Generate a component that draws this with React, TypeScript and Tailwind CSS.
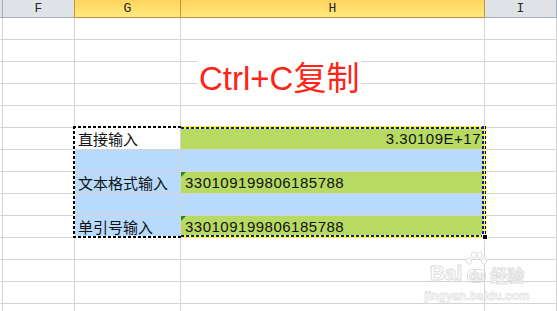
import type { ReactNode } from "react";

const cols = "grid grid-cols-[3px_72px_106px_304px_1fr]";
const line = "border-r border-b border-[#d4d4d4]";
const num = "font-['Liberation_Sans',sans-serif] text-[15px] tracking-[0.5px] text-[#111]";
const cjk = "font-['Noto_Sans_CJK_SC',sans-serif] text-[15px] text-[#111]";

type Row = {
  label?: string;
  labelBg?: string;
  value?: string;
  valueBg?: string;
  right?: boolean;
};

const tableRows: Record<number, Row> = {
  6: { label: "直接输入", labelBg: "bg-white", value: "3.30109E+17", valueBg: "bg-[#b7da62]", right: true },
  7: { labelBg: "bg-[#b8dbfd]", valueBg: "bg-[#b8dbfd]" },
  8: { label: "文本格式输入", labelBg: "bg-[#b8dbfd]", value: "330109199806185788", valueBg: "bg-[#b7da62]" },
  9: { labelBg: "bg-[#b8dbfd]", valueBg: "bg-[#b8dbfd]" },
  10: { label: "单引号输入", labelBg: "bg-[#b8dbfd]", value: "330109199806185788", valueBg: "bg-[#b7da62]" },
};

function HeaderCell({ children, active }: { children: ReactNode; active?: boolean }) {
  return (
    <div
      className={
        active
          ? "flex h-[18px] items-center justify-center border-r border-b border-[#c8913a] bg-[linear-gradient(180deg,#ffd35c,#ffea80)]"
          : "flex h-[18px] items-center justify-center border-r border-b border-[#a6aeb8] bg-[#dfe3e8]"
      }
    >
      <span className="font-['Liberation_Mono',monospace] text-[13px] leading-none text-[#2a2a2a]">{children}</span>
    </div>
  );
}

function SheetRow({ index }: { index: number }) {
  const r = tableRows[index];
  return (
    <div className={cols}>
      <div className={`h-[22px] ${line}`} />
      <div className={`h-[22px] ${line}`} />
      <div className={`flex h-[22px] items-center pl-[3px] ${line} ${r?.labelBg ?? ""}`}>
        {r?.label && <span className={`${cjk} leading-none`}>{r.label}</span>}
      </div>
      <div
        className={`relative flex h-[22px] items-center ${r?.right ? "justify-end pr-[3px]" : "pl-[4px]"} ${line} ${r?.valueBg ?? ""}`}
      >
        {r?.value && !r.right && (
          <span className="absolute left-0 top-0 h-0 w-0 border-t-[5px] border-r-[5px] border-t-[#1f8a1f] border-r-transparent" />
        )}
        {r?.value && <span className={`${num} leading-none`}>{r.value}</span>}
      </div>
      <div className={`h-[22px] ${line}`} />
    </div>
  );
}

function Watermark() {
  const outline = "text-white [-webkit-text-stroke:1px_#dedede]";
  return (
    <div className="pointer-events-none absolute left-[424px] top-[251px] flex w-[106px] flex-col items-center">
      <div className="flex items-end gap-[2px]">
        <span className={`font-['Liberation_Sans',sans-serif] text-[21px] font-bold leading-none ${outline}`}>Bai</span>
        <div className="relative flex h-[32px] w-[24px] flex-col items-center justify-end">
          <svg width="24" height="17" viewBox="0 0 24 17" className="absolute top-0">
            <g fill="#fff" stroke="#dedede" strokeWidth="1">
              <ellipse cx="5" cy="10" rx="2.6" ry="3.2" />
              <ellipse cx="10" cy="4" rx="2.6" ry="3.2" />
              <ellipse cx="15.5" cy="4" rx="2.6" ry="3.2" />
              <ellipse cx="20" cy="10" rx="2.6" ry="3.2" />
            </g>
          </svg>
          <span className={`rounded-[6px] border border-[#dedede] px-[1px] font-['Liberation_Sans',sans-serif] text-[12px] font-bold leading-none ${outline}`}>
            du
          </span>
        </div>
        <span className={`font-['Noto_Sans_CJK_SC',sans-serif] text-[17px] font-bold leading-none ${outline}`}>经验</span>
      </div>
      <span className="mt-[7px] font-['Liberation_Sans',sans-serif] text-[12px] font-bold leading-none text-white [-webkit-text-stroke:0.7px_#e0e0e0]">
        jingyan.baidu.com
      </span>
    </div>
  );
}

export default function App() {
  const rows = Array.from({ length: 14 }, (_, i) => i + 1);
  const bw = "bg-[repeating-linear-gradient(90deg,#000_0_3px,#fff_3px_5px)]";
  const bwV = "bg-[repeating-linear-gradient(180deg,#000_0_3px,#fff_3px_5px)]";
  const yb = "bg-[repeating-linear-gradient(90deg,#0a14d8_0_3px,#ffff00_3px_5px)]";
  const ybV = "bg-[repeating-linear-gradient(180deg,#0a14d8_0_3px,#ffff00_3px_5px)]";

  return (
    <div className="relative h-[311px] w-[557px] overflow-hidden bg-white">
      <div className={cols}>
        <div className="h-[18px] border-r border-b border-[#a6aeb8] bg-[#dfe3e8]" />
        <div className="flex h-[18px] items-center justify-center border-r border-b border-r-[#c8913a] border-b-[#a6aeb8] bg-[#dfe3e8]">
          <span className="font-['Liberation_Mono',monospace] text-[13px] leading-none text-[#2a2a2a]">F</span>
        </div>
        <HeaderCell active>G</HeaderCell>
        <HeaderCell active>H</HeaderCell>
        <HeaderCell>I</HeaderCell>
      </div>
      {rows.map((i) => (
        <SheetRow key={i} index={i} />
      ))}

      {/* overflowing title text */}
      <div className="absolute left-[197px] top-[55px] flex h-[46px] items-center bg-white px-[2px]">
        <span className="font-['Liberation_Sans','Noto_Sans_CJK_SC',sans-serif] text-[33px] leading-none text-[#ff2318]">
          Ctrl+C复制
        </span>
      </div>

      {/* copy marquee, label column */}
      <div className={`absolute left-[73px] top-[126px] h-[2px] w-[108px] ${bw}`} />
      <div className={`absolute left-[73px] top-[236px] h-[2px] w-[108px] ${bw}`} />
      <div className={`absolute left-[73px] top-[126px] h-[112px] w-[2px] ${bwV}`} />

      {/* copy marquee, value column */}
      <div className="absolute left-[181px] top-[126px] h-[3px] w-[305px] bg-[#ffff00]" />
      <div className={`absolute left-[181px] top-[127px] h-[2px] w-[305px] ${yb}`} />
      <div className="absolute left-[181px] top-[235px] h-[3px] w-[305px] bg-[#ffff00]" />
      <div className={`absolute left-[181px] top-[235px] h-[2px] w-[305px] ${yb}`} />
      <div className="absolute left-[482px] top-[126px] h-[112px] w-[3px] bg-[#ffff00]" />
      <div className={`absolute left-[482px] top-[126px] h-[112px] w-[2px] ${ybV}`} />
      <div className={`absolute left-[485px] top-[126px] h-[110px] w-[1px] ${bwV}`} />

      {/* fill handle */}
      <div className="absolute left-[482px] top-[234px] h-[6px] w-[6px] border border-white bg-black" />

      <Watermark />
    </div>
  );
}
